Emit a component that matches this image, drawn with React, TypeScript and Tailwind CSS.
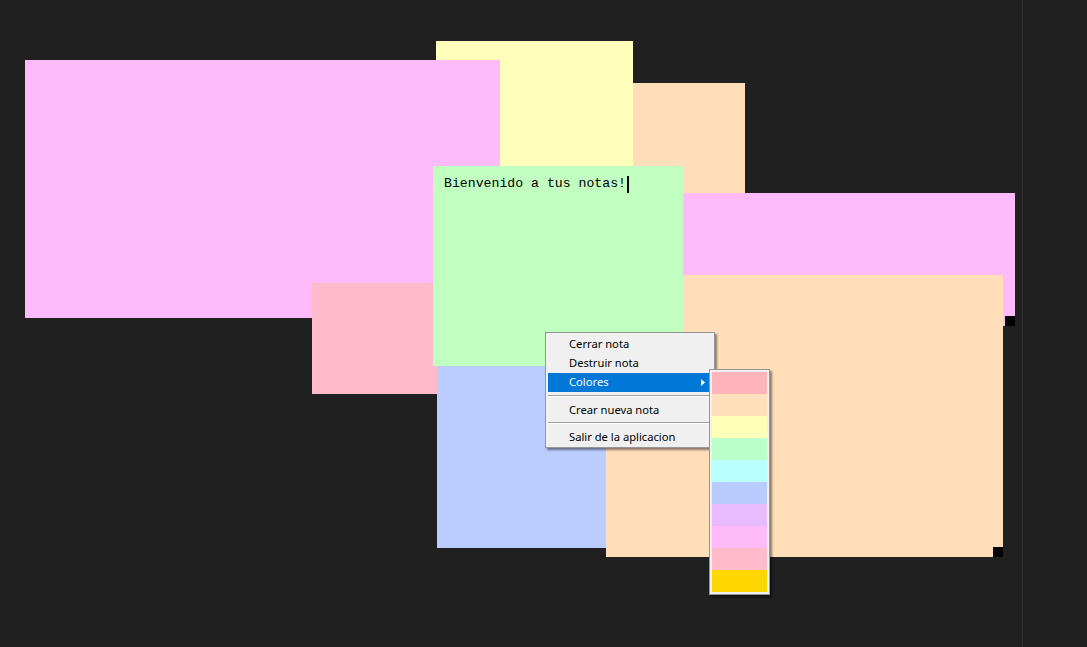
type Note = { x: number; y: number; w: number; h: number; bg: string; grip?: boolean; text?: string };

const notes: Note[] = [
  { x: 436, y: 41, w: 197, h: 200, bg: "bg-[#ffffbb]" },
  { x: 633, y: 83, w: 112, h: 160, bg: "bg-[#ffdeb9]" },
  { x: 25, y: 60, w: 475, h: 258, bg: "bg-[#ffbbf9]" },
  { x: 683, y: 193, w: 332, h: 133, bg: "bg-[#ffbbf9]", grip: true },
  { x: 312, y: 283, w: 125, h: 111, bg: "bg-[#ffbbcc]" },
  { x: 437, y: 366, w: 169, h: 182, bg: "bg-[#bbccff]" },
  { x: 606, y: 275, w: 397, h: 282, bg: "bg-[#ffdeb9]", grip: true },
  { x: 433, y: 166, w: 250, h: 200, bg: "bg-[#c0ffc0]", text: "Bienvenido a tus notas!" },
];

const swatches = [
  "bg-[#ffb3ba]",
  "bg-[#ffdfba]",
  "bg-[#ffffba]",
  "bg-[#baffc9]",
  "bg-[#baffff]",
  "bg-[#bacbff]",
  "bg-[#e8baff]",
  "bg-[#ffbaf7]",
  "bg-[#ffbacb]",
  "bg-[#ffd700]",
];

function StickyNote({ n }: { n: Note }) {
  return (
    <div
      className={`absolute ${n.bg}`}
      style={{ left: n.x, top: n.y, width: n.w, height: n.h }}
    >
      {n.text && (
        <div className="pl-[11px] pt-[9px] flex items-center text-[13.2px] leading-[18px] text-black font-['Liberation_Mono',monospace]">
          <span>{n.text}</span>
          <span className="w-[2px] h-[17px] bg-black ml-px" />
        </div>
      )}
      {n.grip && <div className="absolute right-0 bottom-0 w-[10px] h-[10px] bg-black" />}
    </div>
  );
}

function MenuItem({ label, active, arrow }: { label: string; active?: boolean; arrow?: boolean }) {
  return (
    <div
      className={`h-[19px] mx-[2px] pl-[21px] pr-[7px] flex items-center justify-between ${
        active ? "bg-[#0078d7] text-white" : "text-black"
      }`}
    >
      <span>{label}</span>
      {arrow && (
        <svg width="4" height="7" viewBox="0 0 4 7">
          <path d="M0 0 L4 3.5 L0 7 Z" fill="white" />
        </svg>
      )}
    </div>
  );
}

function Separator({ top }: { top: string }) {
  return (
    <div className={`mx-[2px] mb-[4px] ${top}`}>
      <div className="h-px bg-[#a0a0a0]" />
      <div className="h-px bg-white" />
    </div>
  );
}

export default function App() {
  return (
    <div className="relative w-[1087px] h-[647px] bg-[#202020] overflow-hidden font-['Noto_Sans',sans-serif]">
      <div className="absolute left-[1022px] top-0 w-px h-full bg-[#2e2e2e]" />

      {notes.map((n, i) => (
        <StickyNote key={i} n={n} />
      ))}

      {/* context menu */}
      <div className="absolute left-[545px] top-[332px] w-[170px] bg-[#f0f0f0] border border-[#979797] pt-[2px] text-[11.2px] shadow-[2px_2px_2px_rgba(0,0,0,0.45)]">
        <MenuItem label="Cerrar nota" />
        <MenuItem label="Destruir nota" />
        <MenuItem label="Colores" active arrow />
        <Separator top="mt-[3px]" />
        <MenuItem label="Crear nueva nota" />
        <Separator top="mt-[2px]" />
        <MenuItem label="Salir de la aplicacion" />
      </div>

      {/* colors submenu */}
      <div className="absolute left-[709px] top-[369px] w-[61px] bg-[#f0f0f0] border border-[#979797] p-[2px] shadow-[2px_2px_2px_rgba(0,0,0,0.45)]">
        {swatches.map((s) => (
          <div key={s} className={`h-[22px] ${s}`} />
        ))}
      </div>
    </div>
  );
}
